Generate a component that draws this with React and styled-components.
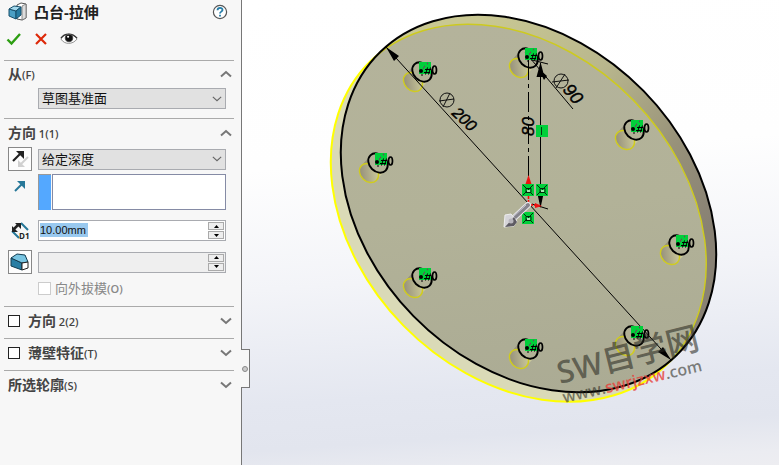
import React from "react";
import styled, { createGlobalStyle } from "styled-components";

const Global = createGlobalStyle`
  * { box-sizing: border-box; }
  body { margin: 0; background: #fff; }
  button, input, select { font: inherit; color: inherit; margin: 0; }
`;

const Layout = styled.div`
  display: grid;
  grid-template-columns: 242px minmax(0, 1fr);
  min-height: 100vh;
  font: 13px/20px "Open Sans", "Noto Sans CJK SC", sans-serif;
  color: #444;
`;

const Panel = styled.aside`
  position: relative;
  background: #f7f7f7;
  border-right: 1px solid #777;
  padding: 0 7px 0 4px;
`;

const TitleBar = styled.header`
  display: flex;
  align-items: center;
  gap: 6px;
  height: 24px;
  padding: 0 6px 0 4px;
`;

const Title = styled.h1`
  flex: 1;
  margin: 0;
  font-size: 15px;
  line-height: 24px;
  font-weight: 700;
  color: #222;
`;

const IconButton = styled.button`
  display: grid;
  place-items: center;
  padding: 0;
  border: 0;
  background: none;
`;

const Actions = styled.div`
  display: flex;
  align-items: center;
  gap: 12px;
  height: 36px;
  padding: 0 2px 6px;
`;

const Section = styled.section`
  border-top: 1px solid #aaa;
  padding: ${(p) => (p.$lead ? 3 : 4)}px 0 ${(p) => (p.$lead ? 9 : 7)}px;
`;

const SectionHead = styled.div`
  display: flex;
  align-items: center;
  gap: 8px;
  height: 20px;
  padding: 0 2px 0 4px;
`;

const Heading = styled.label`
  flex: 1;
  font-size: 14px;
  font-weight: 700;
  color: #444;
`;

const Shortcut = styled.span`
  font-size: 11px;
  font-weight: 600;
`;

const Row = styled.div`
  display: grid;
  grid-template-columns: 24px minmax(0, 1fr);
  column-gap: 6px;
  align-items: center;
  margin: ${(p) => p.$gap || 0}px 8px 0 4px;
`;

const SelectBox = styled.div`
  grid-column: 2;
  display: grid;
  align-items: center;
  height: 21px;
  svg { grid-area: 1 / 1; justify-self: end; margin-right: 4px; pointer-events: none; }
`;

const Select = styled.select`
  grid-area: 1 / 1;
  width: 100%;
  height: 21px;
  padding: 0 20px 0 3px;
  appearance: none;
  border: 1px solid #a9abb0;
  border-radius: 0;
  background: #e1e1e1;
  color: #111;
  font-size: 13px;
  line-height: 19px;
`;

const FrameButton = styled(IconButton)`
  width: 24px;
  height: 24px;
  border: 1px solid #888;
  background: #fdfdfd;
`;

const Picker = styled.div`
  display: grid;
  grid-template-columns: 13px minmax(0, 1fr);
  gap: 1px;
  width: 100%;
  height: 36px;
`;

const PickerMark = styled.span`
  background: #54a8ff;
  border: 1px solid #999;
  border-width: 1px 0 0 1px;
`;

const PickerList = styled.input`
  width: 100%;
  height: 36px;
  border: 1px solid #858ba5;
  background: #fff;
`;

const IconSlot = styled.span`
  display: grid;
  place-items: center;
  align-self: ${(p) => (p.$top ? "start" : "center")};
  padding-top: ${(p) => (p.$top ? 5 : 0)}px;
`;

const Spinner = styled.div`
  display: grid;
  grid-template-columns: minmax(0, 1fr) 17px;
  align-items: center;
  height: 21px;
  border: 1px solid #a9abb0;
  background: ${(p) => (p.$off ? "#efefef" : "#fff")};
`;

const SpinnerInput = styled.input`
  width: 100%;
  height: 15px;
  padding: 0 1px;
  border: 0;
  outline: 0;
  font: 11px/15px "Liberation Sans", sans-serif;
  color: #111;
  background: ${(p) => (p.$picked ? "linear-gradient(#99c9ef, #99c9ef) 1px 0 / 48px 14px no-repeat" : "transparent")};
`;

const Steps = styled.div`
  display: grid;
  gap: 1px;
  padding-right: 1px;
`;

const Step = styled(IconButton)`
  height: 8px;
  border: 1px solid #aaa;
  background: #eee;
`;

const CheckRow = styled.label`
  grid-column: 2;
  display: flex;
  align-items: center;
  gap: 4px;
  font-size: 13px;
  color: #888;
`;

const Check = styled.input.attrs({ type: "checkbox" })`
  appearance: none;
  width: ${(p) => (p.disabled ? 13 : 12)}px;
  height: ${(p) => (p.disabled ? 13 : 12)}px;
  border: 1px solid ${(p) => (p.disabled ? "#ccc" : "#222")};
  background: #fff;
`;

const PanelHandle = styled.button`
  position: absolute;
  top: 349px;
  left: 241px;
  display: grid;
  place-items: center;
  width: 9px;
  height: 39px;
  padding: 0;
  border: 1px solid #777;
  border-left: 0;
  background: #f7f7f7;
  z-index: 1;
`;

const HandleDot = styled.span`
  width: 6px;
  height: 6px;
  border: 1px solid #888;
  border-radius: 50%;
  background: #ccc;
`;

const Viewport = styled.main`
  overflow: hidden;
  background: linear-gradient(176deg, #fff 0%, #fefefe 34%, #f3f4f8 58%, #e4e7f0 81%, #e2e5ee 90%, #ebecf1 97%, #ededf1 100%);
`;

const Scene = styled.svg`
  display: block;
  width: 537px;
  height: 465px;
`;

function Chevron({ up, thin }) {
  return (
    <svg width={thin ? 10 : 12} height="8" viewBox="0 0 12 8" aria-hidden="true">
      <path d={up ? "M1 6.5 6 2l5 4.5" : "M1 1.5 6 6l5-4.5"} fill="none" stroke={thin ? "#666" : "#777"} strokeWidth={thin ? 1.4 : 2} />
    </svg>
  );
}

function Head({ id, name, hotkey, open, checkable }) {
  return (
    <SectionHead>
      {checkable && <Check id={id} />}
      <Heading htmlFor={checkable ? id : undefined} as={checkable ? "label" : "div"}>
        {name}<Shortcut>{hotkey}</Shortcut>
      </Heading>
      <IconButton aria-label={name} aria-expanded={!!open}><Chevron up={open} /></IconButton>
    </SectionHead>
  );
}

function Dropdown({ label, value }) {
  return (
    <SelectBox>
      <Select aria-label={label} defaultValue={value}><option>{value}</option></Select>
      <Chevron thin />
    </SelectBox>
  );
}

function NumberBox({ label, value, off, picked }) {
  return (
    <Spinner $off={off}>
      <SpinnerInput aria-label={label} defaultValue={value} disabled={off} $picked={picked} />
      <Steps>
        <Step aria-label="+"><svg width="5" height="3"><path d="M0 3 2.5 0 5 3z" /></svg></Step>
        <Step aria-label="-"><svg width="5" height="3"><path d="M0 0 2.5 3 5 0z" /></svg></Step>
      </Steps>
    </Spinner>
  );
}

const ExtrudeIcon = () => (
  <svg width="20" height="20" viewBox="0 0 20 20" aria-hidden="true">
    <path d="M9 3 13 1l5 1v14l-4 2-5-1z" fill="#fff" stroke="#555" />
    <path d="M14 4v14l4-2V2z" fill="#ddd" stroke="#666" strokeWidth=".7" />
    <path d="M1 7 8 9v8l-7-3z" fill="#4b9fc4" stroke="#174f6b" />
    <path d="m1 7 5-3 7 1-5 4z" fill="#a4d9ed" stroke="#174f6b" />
    <path d="m8 9 5-4v8l-5 4z" fill="#277ca3" stroke="#174f6b" />
  </svg>
);

const HelpIcon = () => (
  <svg width="16" height="16" viewBox="0 0 16 16" aria-hidden="true">
    <circle cx="8" cy="8" r="6.6" fill="#fff" stroke="#555" strokeWidth="1.2" />
    <path d="M5.5 6.3C5.6 3 10.8 3.3 10.5 6.1 10.4 7.6 8 7.7 8 9.5M8 10.8v1.7" fill="none" stroke="#267da8" strokeWidth="1.8" />
  </svg>
);

const CheckIcon = () => (
  <svg width="16" height="14" viewBox="0 0 16 14" aria-hidden="true">
    <path d="m1.5 7.5 4 4L14 2" fill="none" stroke="#2d9e12" strokeWidth="2.4" />
  </svg>
);

const CrossIcon = () => (
  <svg width="14" height="14" viewBox="0 0 14 14" aria-hidden="true">
    <path d="m2 2 10 10M12 2 2 12" stroke="#dd2909" strokeWidth="2.2" />
  </svg>
);

const EyeIcon = () => (
  <svg width="18" height="16" viewBox="0 0 20 16" aria-hidden="true">
    <path d="M1 8C5 1.500 14 1 19 8 14 14.500 5 14.500 1 8z" fill="#fff" stroke="#888" />
    <path d="M1 7C5 1 14 1 19 7" fill="none" stroke="#333" strokeWidth="1.300" />
    <circle cx="10" cy="7" r="4.700" fill="#555" />
    <circle cx="10" cy="7" r="3.600" fill="#111" />
    <circle cx="9" cy="5.500" r="1.200" fill="#fff" />
  </svg>
);

const FlipIcon = () => (
  <svg width="20" height="20" viewBox="0 0 20 20" aria-hidden="true">
    <path d="m18 8-8 8" stroke="#d0d0d0" strokeWidth="2" />
    <path d="M8 11v7h7z" fill="#d0d0d0" />
    <path d="m3 12 7-7" stroke="#222" strokeWidth="2.200" />
    <path d="M6 2h8v8z" fill="#222" />
  </svg>
);

const ArrowIcon = () => (
  <svg width="14" height="14" viewBox="0 0 14 14" aria-hidden="true">
    <path d="m2 12 7-7" stroke="#277899" strokeWidth="2" />
    <path d="M4 2h8v8z" fill="#277899" />
  </svg>
);

const DepthIcon = () => (
  <svg width="20" height="20" viewBox="0 0 20 20" aria-hidden="true">
    <path d="m2 10 7 7M11 2l7 7" stroke="#277899" strokeWidth="2" />
    <path d="m4 8 5-5" stroke="#222" strokeWidth="2.500" />
    <path d="M2 5v6h6zM5 2h6v6z" fill="#222" />
    <text x="9" y="18" fontFamily="Open Sans" fontWeight="700" fontSize="8" fill="#222">D1</text>
  </svg>
);

const DraftIcon = () => (
  <svg width="20" height="18" viewBox="0 0 20 18" aria-hidden="true">
    <path d="M1 5v8l11 4v-7z" fill="#287ea4" stroke="#123c50" />
    <path d="m1 5 6-4 8 1 3 7-6 1z" fill="#79c5e2" stroke="#123c50" />
    <path d="M12 10 18 9v6l-6 2z" fill="#fff" stroke="#222" />
  </svg>
);

const HOLES = [[422, 72], [528, 58], [378, 163], [634, 130], [679, 245], [634, 336], [528, 349], [422, 278]];

function Disc({ x, y, ...rest }) {
  return <ellipse rx="212" ry="161" transform={`translate(${x} ${y}) rotate(45.6)`} {...rest} />;
}

function Hole({ x, y }) {
  return (
    <g transform={`translate(${x} ${y})`}>
      <path d="M-7-8-16 2-2 17 7 8z" fill="url(#wall)" />
      <ellipse rx="10.500" ry="8.500" transform="translate(-9 10) rotate(45)" fill="url(#bore)" stroke="#d0cc1e" strokeWidth="1.400" />
      <ellipse rx="10.800" ry="8.500" transform="rotate(45)" fill="#b2b196" stroke="#000" strokeWidth="1.900" />
    </g>
  );
}

function Relation({ x, y }) {
  return (
    <g transform={`translate(${x} ${y})`}>
      <path d="M-3-10H9V2H-3z" fill="#00cf3a" />
      <circle cx="-1" cy="-1" r="2" />
      <path d="M0 2v2M3-2.500h6M2 .500h6M5.500-4.500 3.500 2.500M8.500-4.500 6.500 2.500" stroke="#000" />
      <path d="M2-5.500h1M5-8.500h1M1-4h1" stroke="#803060" strokeWidth="1.500" />
      <ellipse cx="12.500" cy="-2" rx="2" ry="4" fill="none" stroke="#000" strokeWidth="1.700" />
    </g>
  );
}

function Coincident({ x, y }) {
  return (
    <g transform={`translate(${x} ${y})`}>
      <path d="M0 0h12v12H0z" fill="#00cf3a" />
      <path d="m1 11 10-10M7 7l4 4M1 1l3 3M4 4.500h5v4H4z" fill="none" stroke="#03280c" strokeWidth="1" />
      <path d="M5 6h3v2H5z" fill="#a6e6b0" />
    </g>
  );
}

function Model() {
  return (
    <Scene viewBox="242 0 537 465" role="img" aria-label="凸台-拉伸">
      <defs>
        <linearGradient id="side" gradientUnits="userSpaceOnUse" x1="480" y1="20" x2="715" y2="220">
          <stop offset="0" stopColor="#c9c893" /><stop offset=".4" stopColor="#b9b78d" /><stop offset=".75" stopColor="#979179" /><stop offset="1" stopColor="#888174" />
        </linearGradient>
        <linearGradient id="face" gradientUnits="userSpaceOnUse" x1="490" y1="20" x2="530" y2="400">
          <stop offset="0" stopColor="#b4b39b" /><stop offset=".5" stopColor="#b2b298" /><stop offset="1" stopColor="#abab94" />
        </linearGradient>
        <linearGradient id="bore" x1="0" y1="1" x2="1" y2="0"><stop offset=".1" stopColor="#928c7a" /><stop offset=".9" stopColor="#cdcb9a" /></linearGradient>
        <linearGradient id="wall" x1="0" y1="0" x2="1" y2="1"><stop offset=".1" stopColor="#8c8674" /><stop offset=".8" stopColor="#cdcb9a" /></linearGradient>
        <clipPath id="front"><Disc x={528.5} y={203.5} /></clipPath>
        <clipPath id="back"><Disc x={518.5} y={213} /></clipPath>
      </defs>
      <Disc x={518.5} y={213} fill="#dadab7" stroke="#ffff00" strokeWidth="2" />
      <g clipPath="url(#front)">
        <rect x="330" y="10" width="400" height="400" fill="url(#side)" />
        <rect x="330" y="10" width="400" height="400" fill="url(#face)" clipPath="url(#back)" />
        <Disc x={518.5} y={213} fill="none" stroke="#cdca20" strokeWidth="1.500" />
      </g>
      {HOLES.map(([x, y]) => <Hole key={`${x}-${y}`} x={x} y={y} />)}
      <Disc x={528.5} y={203.5} fill="none" stroke="#000" strokeWidth="2" />

      <g stroke="#000" fill="none">
        <path d="m386 47 285 313M525 52l48 57" />
        <path d="M528.500 60v118" strokeDasharray="20 4 4 4" />
        <path d="M540.500 63v144M532 60l16 4M532 204l16 5" />
      </g>
      <path d="m386 47 13 9-5 5zM671 360l-13-8 5-5zM540.500 62l4 15h-8zM540.500 208l3-14h-6zM538 68l9 8-3 4z" />

      <g fontFamily="Liberation Sans, sans-serif" fontStyle="italic" fill="#000" stroke="#000" strokeWidth=".4">
        <text transform="translate(451 114) rotate(43)" fontSize="16">200</text>
        <text transform="translate(534 136) rotate(-90)" fontSize="17">80</text>
        <text transform="translate(562 90) rotate(50)" fontSize="18">90</text>
      </g>
      <g fill="none" stroke="#111">
        <ellipse cx="447" cy="100" rx="7" ry="7" /><path d="m439 101 15-2M443 107l7-14" />
        <ellipse cx="561" cy="81" rx="7" ry="7" /><path d="m552 82 17-2M556 88l9-14" />
      </g>

      {HOLES.map(([x, y]) => <Relation key={`${x}-${y}`} x={x} y={y} />)}
      <path d="M536 125h12v12h-12z" fill="#00cf3a" /><path d="M541.500 127v8" stroke="#033b10" />
      <Coincident x={522} y={184} /><Coincident x={536} y={184} /><Coincident x={522} y={212} />
      <path d="M528.500 196v8M530 205h6" stroke="#f00" strokeWidth="1.500" strokeDasharray="3 1" />
      <path d="m528.500 175 3 9h-6zM542 206l-7-3v5z" fill="#ee1111" />
      <path d="M528 205 514 218" stroke="#e8e8ea" strokeWidth="6" strokeLinecap="round" />
      <path d="M528 205 514 218" stroke="#85838c" strokeWidth="4" strokeLinecap="round" />
      <path d="M526 205 513 217" stroke="#c9c8d0" strokeWidth="1" />
      <path d="m504 227 1-12 6-1 6 7-3 5z" fill="#d5d4d8" stroke="#eee" />
      <path d="m505 227 9-10 3 5-3 4z" fill="#5e5b63" />
      <circle cx="511" cy="221" r="2.500" fill="#b7b5bc" />

      <g fontFamily="Open Sans, Noto Sans CJK SC, sans-serif" fill="#282820" fillOpacity=".58">
        <text transform="translate(560 384) rotate(-14)" fontSize="31" fontWeight="600">SW<tspan fontWeight="500" fontSize="33">自学网</tspan></text>
        <text transform="translate(564 403) rotate(-13)" fontSize="16" fontWeight="600">www.<tspan fill="#e84038" fillOpacity=".8">swrjzxw</tspan>.com</text>
      </g>
    </Scene>
  );
}

export default function App() {
  return (
    <>
      <Global />
      <Layout>
        <Panel>
          <TitleBar>
            <ExtrudeIcon />
            <Title>凸台-拉伸</Title>
            <IconButton aria-label="?"><HelpIcon /></IconButton>
          </TitleBar>
          <Actions>
            <IconButton aria-label="OK"><CheckIcon /></IconButton>
            <IconButton aria-label="Cancel"><CrossIcon /></IconButton>
            <IconButton aria-label="Preview"><EyeIcon /></IconButton>
          </Actions>
          <Section $lead>
            <Head name="从" hotkey="(F)" open />
            <Row $gap={4}><Dropdown label="从" value="草图基准面" /></Row>
          </Section>
          <Section>
            <Head name="方向" hotkey=" 1(1)" open />
            <Row $gap={4}>
              <FrameButton aria-label="反向"><FlipIcon /></FrameButton>
              <Dropdown label="方向 1" value="给定深度" />
            </Row>
            <Row $gap={3}>
              <IconSlot $top><ArrowIcon /></IconSlot>
              <Picker><PickerMark /><PickerList aria-label="方向" readOnly /></Picker>
            </Row>
            <Row $gap={10}>
              <IconSlot><DepthIcon /></IconSlot>
              <NumberBox label="深度" value="10.00mm" picked />
            </Row>
            <Row $gap={9}>
              <FrameButton aria-label="拔模"><DraftIcon /></FrameButton>
              <NumberBox label="拔模角度" value="" off />
            </Row>
            <Row $gap={4}>
              <CheckRow><Check disabled /><span>向外拔模<Shortcut>(O)</Shortcut></span></CheckRow>
            </Row>
          </Section>
          <Section><Head id="dir2" name="方向" hotkey=" 2(2)" checkable /></Section>
          <Section><Head id="thin" name="薄壁特征" hotkey="(T)" checkable /></Section>
          <Section><Head name="所选轮廓" hotkey="(S)" /></Section>
          <PanelHandle aria-label="panel"><HandleDot /></PanelHandle>
        </Panel>
        <Viewport><Model /></Viewport>
      </Layout>
    </>
  );
}
